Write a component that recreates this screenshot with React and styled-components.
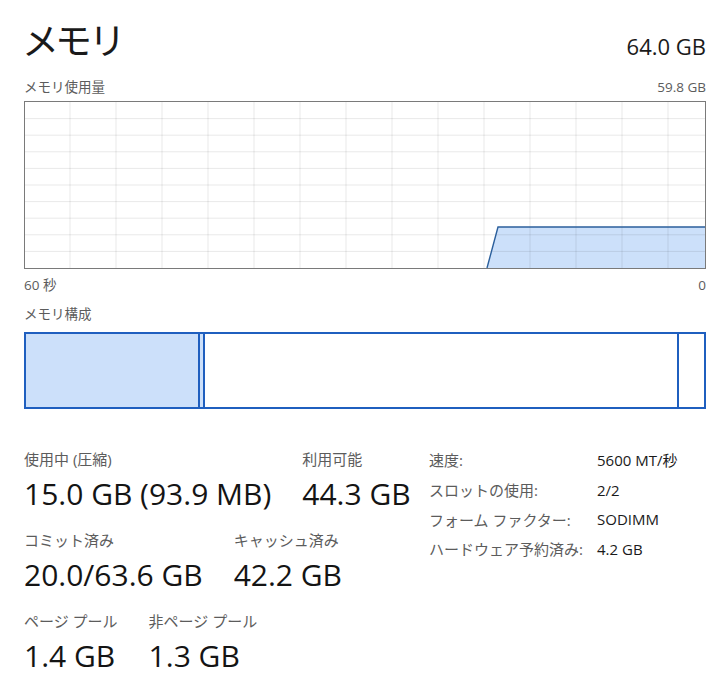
import React from "react";
import styled, { createGlobalStyle } from "styled-components";

const GlobalStyle = createGlobalStyle`
  html, body {
    margin: 0;
    padding: 0;
    background: #ffffff;
  }
  body {
    font-family: "Open Sans", "Noto Sans CJK JP", sans-serif;
    color: #1a1a1a;
  }
`;

const Page = styled.div`
  width: 726px;
  box-sizing: border-box;
  padding: 16px 20px 0 24px;
`;

const Header = styled.div`
  display: flex;
  justify-content: space-between;
  align-items: baseline;
`;

const Title = styled.h1`
  margin: 0;
  font-family: "Noto Sans CJK JP", sans-serif;
  font-weight: 400;
  font-size: 37px;
  line-height: 46px;
  font-feature-settings: "palt";
`;

const Total = styled.span`
  font-size: 22px;
  line-height: 30px;
`;

const CaptionRow = styled.div`
  display: flex;
  justify-content: space-between;
  align-items: center;
  margin-top: ${(p) => p.$top || 0}px;
  height: 18px;
  font-size: 13.5px;
  line-height: 18px;
  color: #5c5c5c;
`;

const Graph = styled.div`
  margin-top: 5px;
  height: 168px;
  box-sizing: border-box;
  border: 1px solid #7a7a7a;
  svg {
    display: block;
  }
`;

const CompositionBar = styled.div`
  display: flex;
  margin-top: 9px;
  height: 77px;
  box-sizing: border-box;
  border: 2px solid #1f5fbf;
`;

const Segment = styled.div`
  flex: ${(p) => (p.$grow ? "1 1 auto" : `0 0 ${p.$width}px`)};
  box-sizing: border-box;
  background: ${(p) => (p.$filled ? "#cce0fa" : "#ffffff")};
  border-right: ${(p) => (p.$last ? "none" : "2px solid #1f5fbf")};
`;

const Stats = styled.div`
  display: flex;
  align-items: flex-start;
  margin-top: 36px;
`;

const StatGroup = styled.div`
  flex: 0 0 405px;
  display: flex;
  flex-direction: column;
  gap: 18px;
  padding-top: 4px;
`;

const StatRow = styled.div`
  display: flex;
  gap: 31px;
`;

const Stat = styled.div`
  display: flex;
  flex-direction: column;
  gap: 7px;
`;

const StatLabel = styled.span`
  font-size: 15px;
  line-height: 20px;
  color: #5c5c5c;
  white-space: nowrap;
`;

const StatValue = styled.span`
  font-size: 30px;
  line-height: 36px;
  color: #141414;
  white-space: nowrap;
`;

const InfoGrid = styled.div`
  display: grid;
  grid-template-columns: 168px auto;
  grid-auto-rows: 29.7px;
  align-items: center;
  font-size: 15px;
`;

const InfoLabel = styled.span`
  color: #5c5c5c;
  white-space: nowrap;
`;

const InfoValue = styled.span`
  color: #1a1a1a;
  white-space: nowrap;
`;

const stats = [
  [
    { label: "使用中 (圧縮)", value: "15.0 GB (93.9 MB)" },
    { label: "利用可能", value: "44.3 GB" },
  ],
  [
    { label: "コミット済み", value: "20.0/63.6 GB" },
    { label: "キャッシュ済み", value: "42.2 GB" },
  ],
  [
    { label: "ページ プール", value: "1.4 GB" },
    { label: "非ページ プール", value: "1.3 GB" },
  ],
];

const info = [
  ["速度:", "5600 MT/秒"],
  ["スロットの使用:", "2/2"],
  ["フォーム ファクター:", "SODIMM"],
  ["ハードウェア予約済み:", "4.2 GB"],
];

function UsageChart() {
  const w = 680;
  const h = 166;
  const cols = [];
  for (let x = 45; x < w; x += 46) cols.push(x);
  const rows = [];
  for (let i = 1; i < 10; i++) rows.push((h / 10) * i);

  return (
    <svg width={w} height={h} viewBox={`0 0 ${w} ${h}`}>
      <polygon points={`462,${h} 473,125 ${w},125 ${w},${h}`} fill="#cce0fa" />
      {cols.map((x) => (
        <line key={"c" + x} x1={x} y1={0} x2={x} y2={h} stroke="rgba(0,0,0,0.09)" strokeWidth="1" />
      ))}
      {rows.map((y) => (
        <line key={"r" + y} x1={0} y1={y} x2={w} y2={y} stroke="rgba(0,0,0,0.09)" strokeWidth="1" />
      ))}
      <polyline points={`462,${h} 473,125 ${w},125`} fill="none" stroke="#2b5f9c" strokeWidth="1.4" />
    </svg>
  );
}

export default function App() {
  return (
    <Page>
      <GlobalStyle />
      <Header>
        <Title>メモリ</Title>
        <Total>64.0 GB</Total>
      </Header>

      <CaptionRow $top={16}>
        <span>メモリ使用量</span>
        <span>59.8 GB</span>
      </CaptionRow>
      <Graph>
        <UsageChart />
      </Graph>
      <CaptionRow $top={7}>
        <span>60 秒</span>
        <span>0</span>
      </CaptionRow>

      <CaptionRow $top={11}>
        <span>メモリ構成</span>
      </CaptionRow>
      <CompositionBar>
        <Segment $width={174} $filled />
        <Segment $width={5} $filled />
        <Segment $grow />
        <Segment $width={25} $last />
      </CompositionBar>

      <Stats>
        <StatGroup>
          {stats.map((row, i) => (
            <StatRow key={i}>
              {row.map((s) => (
                <Stat key={s.label}>
                  <StatLabel>{s.label}</StatLabel>
                  <StatValue>{s.value}</StatValue>
                </Stat>
              ))}
            </StatRow>
          ))}
        </StatGroup>
        <InfoGrid>
          {info.map(([label, value]) => (
            <React.Fragment key={label}>
              <InfoLabel>{label}</InfoLabel>
              <InfoValue>{value}</InfoValue>
            </React.Fragment>
          ))}
        </InfoGrid>
      </Stats>
    </Page>
  );
}
